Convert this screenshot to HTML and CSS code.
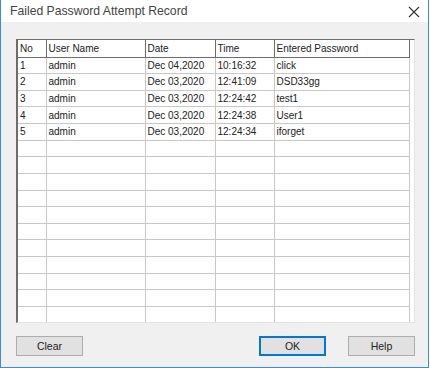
FILE: index.html
```html
<!DOCTYPE html>
<html lang="en">
<head>
    <meta charset="UTF-8">
    <title>Failed Password Attempt Record</title>
    <link rel="stylesheet" href="styles.css">
</head>
<body>
    <div class="dialog">
        <!-- title bar -->
        <div class="title-bar">
            <span class="title">Failed Password Attempt Record</span>
            <svg class="close" width="12" height="12" viewBox="0 0 12 12">
                <path d="M1 1 L11 11 M11 1 L1 11" stroke="#333" stroke-width="1.1" fill="none"/>
            </svg>
        </div>

        <div class="content">
            <!-- record list -->
            <div class="list-view">
                <table class="records">
                    <thead>
                        <tr>
                            <th class="col-no">No</th>
                            <th class="col-user">User Name</th>
                            <th class="col-date">Date</th>
                            <th class="col-time">Time</th>
                            <th class="col-pass">Entered Password</th>
                        </tr>
                    </thead>
                    <tbody id="rows"></tbody>
                </table>
            </div>

            <!-- buttons -->
            <div class="button-row">
                <button class="btn">Clear</button>
                <div class="right-buttons">
                    <button class="btn btn-default">OK</button>
                    <button class="btn">Help</button>
                </div>
            </div>
        </div>
    </div>
    <script>
        const records = [
            ['1', 'admin', 'Dec 04,2020', '10:16:32', 'click'],
            ['2', 'admin', 'Dec 03,2020', '12:41:09', 'DSD33gg'],
            ['3', 'admin', 'Dec 03,2020', '12:24:42', 'test1'],
            ['4', 'admin', 'Dec 03,2020', '12:24:38', 'User1'],
            ['5', 'admin', 'Dec 03,2020', '12:24:34', 'iforget']
        ];
        const tbody = document.getElementById('rows');
        // 16 rows in total, the rest stay empty
        for (let i = 0; i < 16; i++) {
            const tr = document.createElement('tr');
            const rec = records[i] || ['', '', '', '', ''];
            rec.forEach(text => {
                const td = document.createElement('td');
                td.textContent = text;
                tr.appendChild(td);
            });
            tbody.appendChild(tr);
        }
    </script>
</body>
</html>
```

FILE: styles.css
```css
* {
    margin: 0;
    padding: 0;
    box-sizing: border-box;
}

body {
    font-family: 'Liberation Sans', Arial, sans-serif;
    background-color: #fff;
    width: 430px;
    height: 368px;
}

.dialog {
    width: 429px;
    height: 368px;
    border: 1px solid #3c8fd6;
    border-top: none;
    background-color: #f0f0f0;
    display: flex;
    flex-direction: column;
}

.title-bar {
    height: 22px;
    background-color: #fff;
    display: flex;
    align-items: center;
    justify-content: space-between;
    padding: 0 8px 0 9px;
}

.title {
    font-size: 12.2px;
    color: #444;
}

.close {
    margin-top: 1px;
}

.content {
    padding: 17px 13px 0 15px;
}

.list-view {
    width: 399px;
    height: 284px;
    background-color: #fff;
    border-top: 1px solid #6d6d6d;
    border-left: 2px solid #6d6d6d;
    border-right: 1px solid #e3e3e3;
    border-bottom: 1px solid #e3e3e3;
    overflow: hidden;
}

.records {
    border-collapse: collapse;
    table-layout: fixed;
    width: 391px;
    font-size: 10px;
    color: #222;
}

.records th {
    font-weight: normal;
    text-align: left;
    height: 17px;
    padding: 0 2px;
    border-left: 1px solid #8a8a8a;
    border-bottom: 1px solid #6d6d6d;
    border-right: 1px solid #6d6d6d;
    background-color: #fff;
}

.records th:first-child {
    border-left: none;
}

.records td {
    height: 16.625px;
    padding: 0 2px;
    border-right: 1px solid #c8c8c8;
    border-bottom: 1px solid #c8c8c8;
    white-space: nowrap;
}

.col-no { width: 28px; }
.col-user { width: 99px; }
.col-date { width: 70px; }
.col-time { width: 59px; }
.col-pass { width: 135px; }

.button-row {
    display: flex;
    justify-content: space-between;
    margin-top: 13px;
}

.right-buttons {
    display: flex;
    gap: 22px;
}

.btn {
    width: 67px;
    height: 20px;
    font-family: 'Liberation Sans', Arial, sans-serif;
    font-size: 10.5px;
    color: #222;
    background-color: #e1e1e1;
    border: 1px solid #adadad;
}

.btn-default {
    border: 2px solid #0078d7;
}
```
